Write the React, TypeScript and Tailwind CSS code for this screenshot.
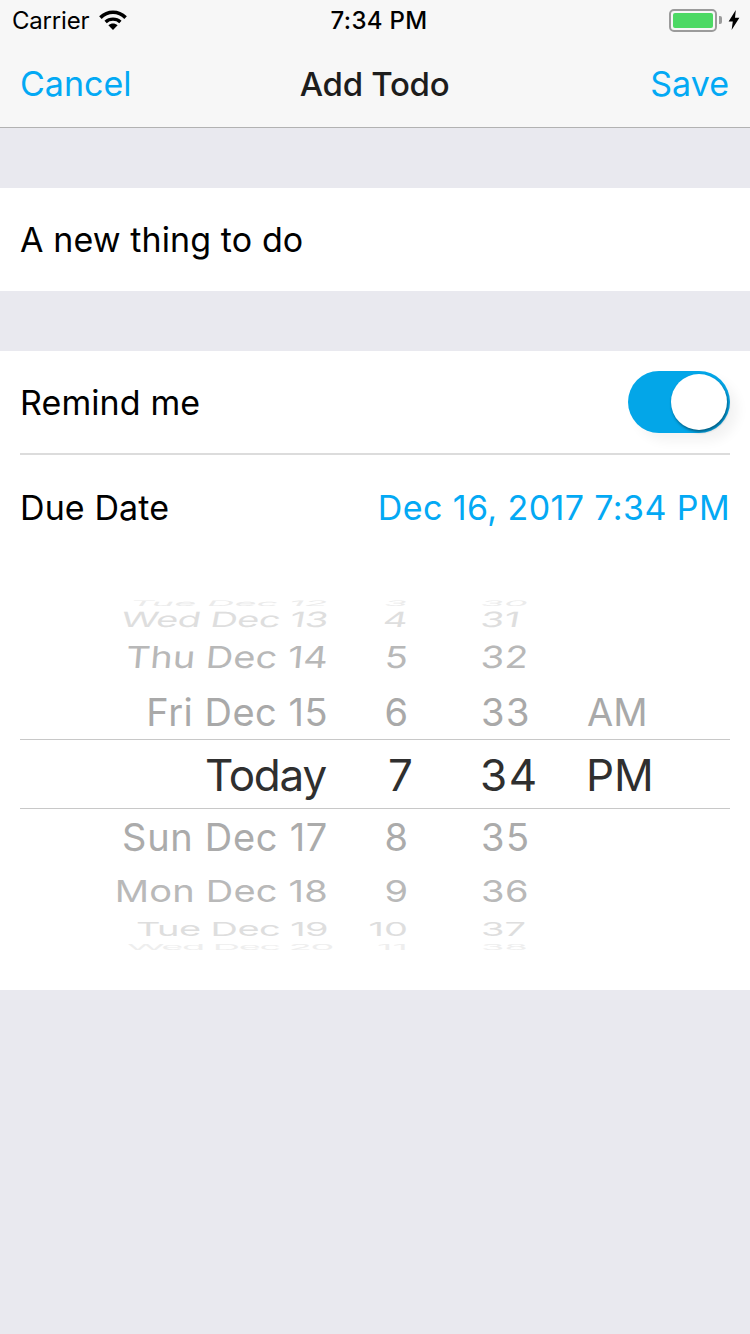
import { ReactNode } from 'react';

const font = "font-['Inter','Roboto',sans-serif]";

function WifiIcon() {
  return (
    <svg width="28" height="20" viewBox="0 0 28 20" className="ml-[10px]">
      <path d="M1.4 7.6C8.8.4 19.2.4 26.6 7.6" fill="none" stroke="#000" strokeWidth="3.6" />
      <path d="M6.6 12c4.2-3.8 10.6-3.8 14.8 0" fill="none" stroke="#000" strokeWidth="3.4" />
      <path d="M9.4 15.2c2.8-2.4 6.4-2.4 9.2 0L14 20z" fill="#000" />
    </svg>
  );
}

function BoltIcon() {
  return (
    <svg width="12" height="20" viewBox="0 0 12 20">
      <path d="M7.8 0 .6 11.4h4.2L3.6 20l7.8-12.2H7z" fill="#000" />
    </svg>
  );
}

function StatusBar() {
  return (
    <div className={`relative flex h-10 items-center justify-between pl-3 pr-[10px] ${font}`}>
      <div className="flex items-center">
        <span className="pt-px text-[24px] tracking-[-0.2px] text-black">Carrier</span>
        <WifiIcon />
      </div>
      <span className="absolute left-2 right-0 pt-px text-center text-[24px] font-medium tracking-[0.3px] text-black">
        7:34 PM
      </span>
      <div className="flex items-center">
        <div className="flex h-[23px] w-[48px] items-center rounded-[5px] border-2 border-[#9b9b9b] p-[2px]">
          <div className="h-full w-full rounded-[2px] bg-[#4cd964]" />
        </div>
        <div className="ml-[2px] h-[8px] w-[3px] rounded-r-[2px] bg-[#9b9b9b]" />
        <div className="ml-[6px]">
          <BoltIcon />
        </div>
      </div>
    </div>
  );
}

function NavBar() {
  return (
    <div className={`grid h-[87px] grid-cols-3 items-center pl-5 pr-[21px] pb-[1px] text-[34px] ${font}`}>
      <span className="text-[#03a9f4]">Cancel</span>
      <span className="whitespace-nowrap pt-[3px] text-center text-[33px] font-medium tracking-[-0.3px] text-[#1d1d1d]">
        Add Todo
      </span>
      <span className="text-right text-[#03a9f4]">Save</span>
    </div>
  );
}

function Toggle() {
  return (
    <div className="flex h-[62px] w-[102px] items-center justify-end rounded-full bg-[#03a6e8] pr-[3px] shadow-[8px_8px_12px_rgba(0,0,0,0.05)]">
      <div className="h-[56px] w-[56px] rounded-full bg-white shadow-[1px_2px_3px_rgba(0,0,0,0.45)]" />
    </div>
  );
}

type RowProps = {
  h: string;
  date: string;
  hour: string;
  min: string;
  ampm?: string;
  tone: string;
  warp: string;
  dateFit?: string;
  minFit?: string;
  ampmFit?: string;
  selected?: boolean;
};

function PickerRow({ h, date, hour, min, ampm, tone, warp, dateFit, minFit, ampmFit, selected }: RowProps) {
  const size = selected ? 'text-[44px]' : 'text-[38px]';
  return (
    <div className={`flex shrink-0 items-center overflow-visible ${h} ${size} ${tone}`}>
      <span className={`w-[308px] origin-right whitespace-nowrap text-right ${warp} ${dateFit}`}>{date}</span>
      <span className={`w-[85px] origin-right text-right ${warp} ${selected ? '' : 'pr-[5px]'}`}>{hour}</span>
      <span className={`ml-[68px] w-[107px] origin-left ${warp} ${minFit}`}>{min}</span>
      <span className={`origin-left ${warp} ${ampmFit}`}>{ampm}</span>
    </div>
  );
}

function Picker() {
  return (
    <div className={`mx-5 mt-[39px] h-[353px] overflow-hidden ${font}`}>
      <PickerRow h="h-[13px]" date="Tue Dec 12" hour="3" min="30" tone="text-[#ebebeb]" warp="scale-y-[0.2] skew-x-[-8deg]" />
      <PickerRow h="h-[18px]" date="Wed Dec 13" hour="4" min="31" tone="text-[#dedede]" warp="scale-y-[0.55] skew-x-[-6deg]" dateFit="tracking-[-0.6px]" />
      <PickerRow h="h-[58px]" date="Thu Dec 14" hour="5" min="32" tone="text-[#b8b8b8]" warp="scale-y-[0.8] skew-x-[-4deg]" minFit="tracking-[0.5px]" />
      <PickerRow h="h-[53px]" date="Fri Dec 15" hour="6" min="33" ampm="AM" tone="text-[#a9a9a9]" warp="scale-y-[1]" dateFit="tracking-[0.5px]" minFit="tracking-[1.5px]" ampmFit="-translate-x-px" />
      <div className="flex h-[70px] shrink-0 flex-col justify-center border-y border-[#c8c8c8]">
        <PickerRow h="h-[68px] pt-[2px]" date="Today" hour="7" min="34" ampm="PM" tone="text-[#2f2f2f]" warp="scale-y-[1]" dateFit="-translate-x-[2px] tracking-[-1.2px]" minFit="-translate-x-px tracking-[1.5px]" ampmFit="-translate-x-[2px]" selected />
      </div>
      <PickerRow h="h-[56px]" date="Sun Dec 17" hour="8" min="35" tone="text-[#ababab]" warp="scale-y-[1]" dateFit="tracking-[0.7px]" minFit="tracking-[1.5px]" />
      <PickerRow h="h-[52px]" date="Mon Dec 18" hour="9" min="36" tone="text-[#b9b9b9]" warp="scale-y-[0.8]" dateFit="tracking-[0.2px]" minFit="tracking-[0.5px]" />
      <PickerRow h="h-[24px]" date="Tue Dec 19" hour="10" min="37" tone="text-[#dedede]" warp="scale-y-[0.5]" dateFit="tracking-[-0.6px]" />
      <PickerRow h="h-[12px]" date="Wed Dec 20" hour="11" min="38" tone="text-[#eeeeee]" warp="scale-y-[0.2]" dateFit="translate-x-[5px] tracking-[-1.5px]" />
    </div>
  );
}

function Section({ children, className }: { children: ReactNode; className: string }) {
  return <div className={`bg-white ${className}`}>{children}</div>;
}

export default function App() {
  return (
    <div className={`flex h-[1334px] w-[750px] flex-col bg-[#e9e9ef] ${font}`}>
      <header className="border-b border-[#b2b2b2] bg-[#f7f7f7]">
        <StatusBar />
        <NavBar />
      </header>

      <Section className="mt-[60px] flex h-[103px] items-center px-5 text-[34px] tracking-[0.1px] text-black">
        A new thing to do
      </Section>

      <Section className="mt-[60px] h-[639px]">
        <div className="mx-5 flex h-[104px] items-center justify-between border-b-2 border-[#dcdcdc] text-[34px] tracking-[0.1px] text-black">
          <span>Remind me</span>
          <Toggle />
        </div>
        <div className="mx-5 flex h-[103px] items-center justify-between pt-[2px] text-[34px]">
          <span className="tracking-[0.1px] text-black">Due Date</span>
          <span className="tracking-[0.4px] text-[#03a9f4]">Dec 16, 2017 7:34 PM</span>
        </div>
        <Picker />
      </Section>
    </div>
  );
}
